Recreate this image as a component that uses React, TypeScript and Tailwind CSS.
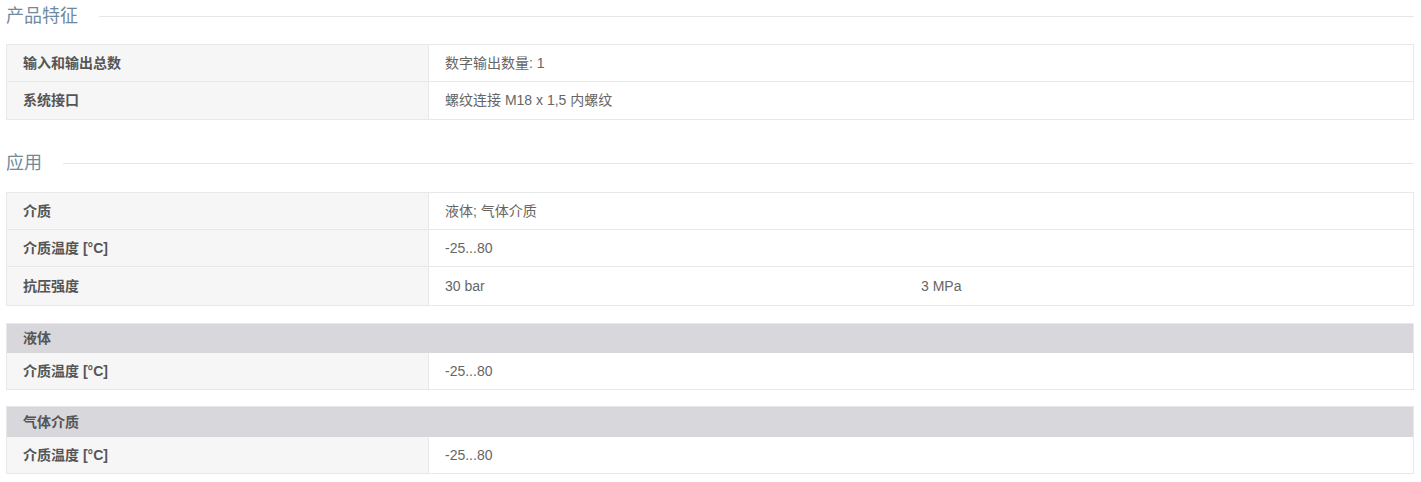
import React from 'react';

type Row = { label: string; values: string[]; h?: string };

const features: Row[] = [
  { label: '输入和输出总数', values: ['数字输出数量: 1'] },
  { label: '系统接口', values: ['螺纹连接 M18 x 1,5 内螺纹'], h: 'h-[38px]' }
];

const application: Row[] = [
  { label: '介质', values: ['液体; 气体介质'] },
  { label: '介质温度 [°C]', values: ['-25...80'] },
  { label: '抗压强度', values: ['30 bar', '3 MPa'], h: 'h-[39px]' }
];

const groups = [
  { title: '液体', head: 'h-[29px]', mt: 'mt-[17px]', rows: [{ label: '介质温度 [°C]', values: ['-25...80'] }] },
  { title: '气体介质', head: 'h-[30px]', mt: 'mt-[16px]', rows: [{ label: '介质温度 [°C]', values: ['-25...80'] }] }
];

function SectionTitle({ title }: { title: string }) {
  return (
    <div className="flex items-center h-[32px]">
      <h2 className="text-[18px] leading-[32px] text-[#6f8a9e] font-normal">{title}</h2>
      <div className="flex-1 h-px bg-[#e6e6e6] ml-[21px]" />
    </div>
  );
}

function DataRow({ row }: { row: Row }) {
  return (
    <div className={`flex border-b border-[#e8e8e8] ${row.h ?? 'h-[37px]'}`}>
      <div className="w-[422px] shrink-0 bg-[#f6f6f6] border-r border-[#e8e8e8] pl-[16px] flex items-center text-[14px] font-bold text-[#555]">
        {row.label}
      </div>
      <div className="flex-1 flex items-center text-[14px] text-[#666]">
        {row.values.map((v, i) => (
          <div key={i} className={i === 0 && row.values.length > 1 ? 'w-[476px] pl-[16px]' : 'flex-1 pl-[16px]'}>
            {v}
          </div>
        ))}
      </div>
    </div>
  );
}

function Table({ rows }: { rows: Row[] }) {
  return (
    <div className="border border-b-0 border-[#e8e8e8]">
      {rows.map((r, i) => (
        <DataRow key={i} row={r} />
      ))}
    </div>
  );
}

export default function App() {
  return (
    <div
      className="bg-white w-[1421px] h-[482px] pl-[6px] pr-[7px]"
      style={{ fontFamily: '"Liberation Sans", "Noto Sans CJK SC", sans-serif' }}
    >
      <SectionTitle title="产品特征" />
      <div className="mt-[12px]">
        <Table rows={features} />
      </div>

      <div className="mt-[27px]">
        <SectionTitle title="应用" />
      </div>
      <div className="mt-[13px]">
        <Table rows={application} />
      </div>

      {groups.map((g, i) => (
        <div key={i} className={`${g.mt} border border-b-0 border-[#e8e8e8]`}>
          <div className={`${g.head} bg-[#d8d7dc] pl-[16px] flex items-center text-[14px] font-bold text-[#555]`}>
            {g.title}
          </div>
          {g.rows.map((r, j) => (
            <DataRow key={j} row={r} />
          ))}
        </div>
      ))}
    </div>
  );
}
